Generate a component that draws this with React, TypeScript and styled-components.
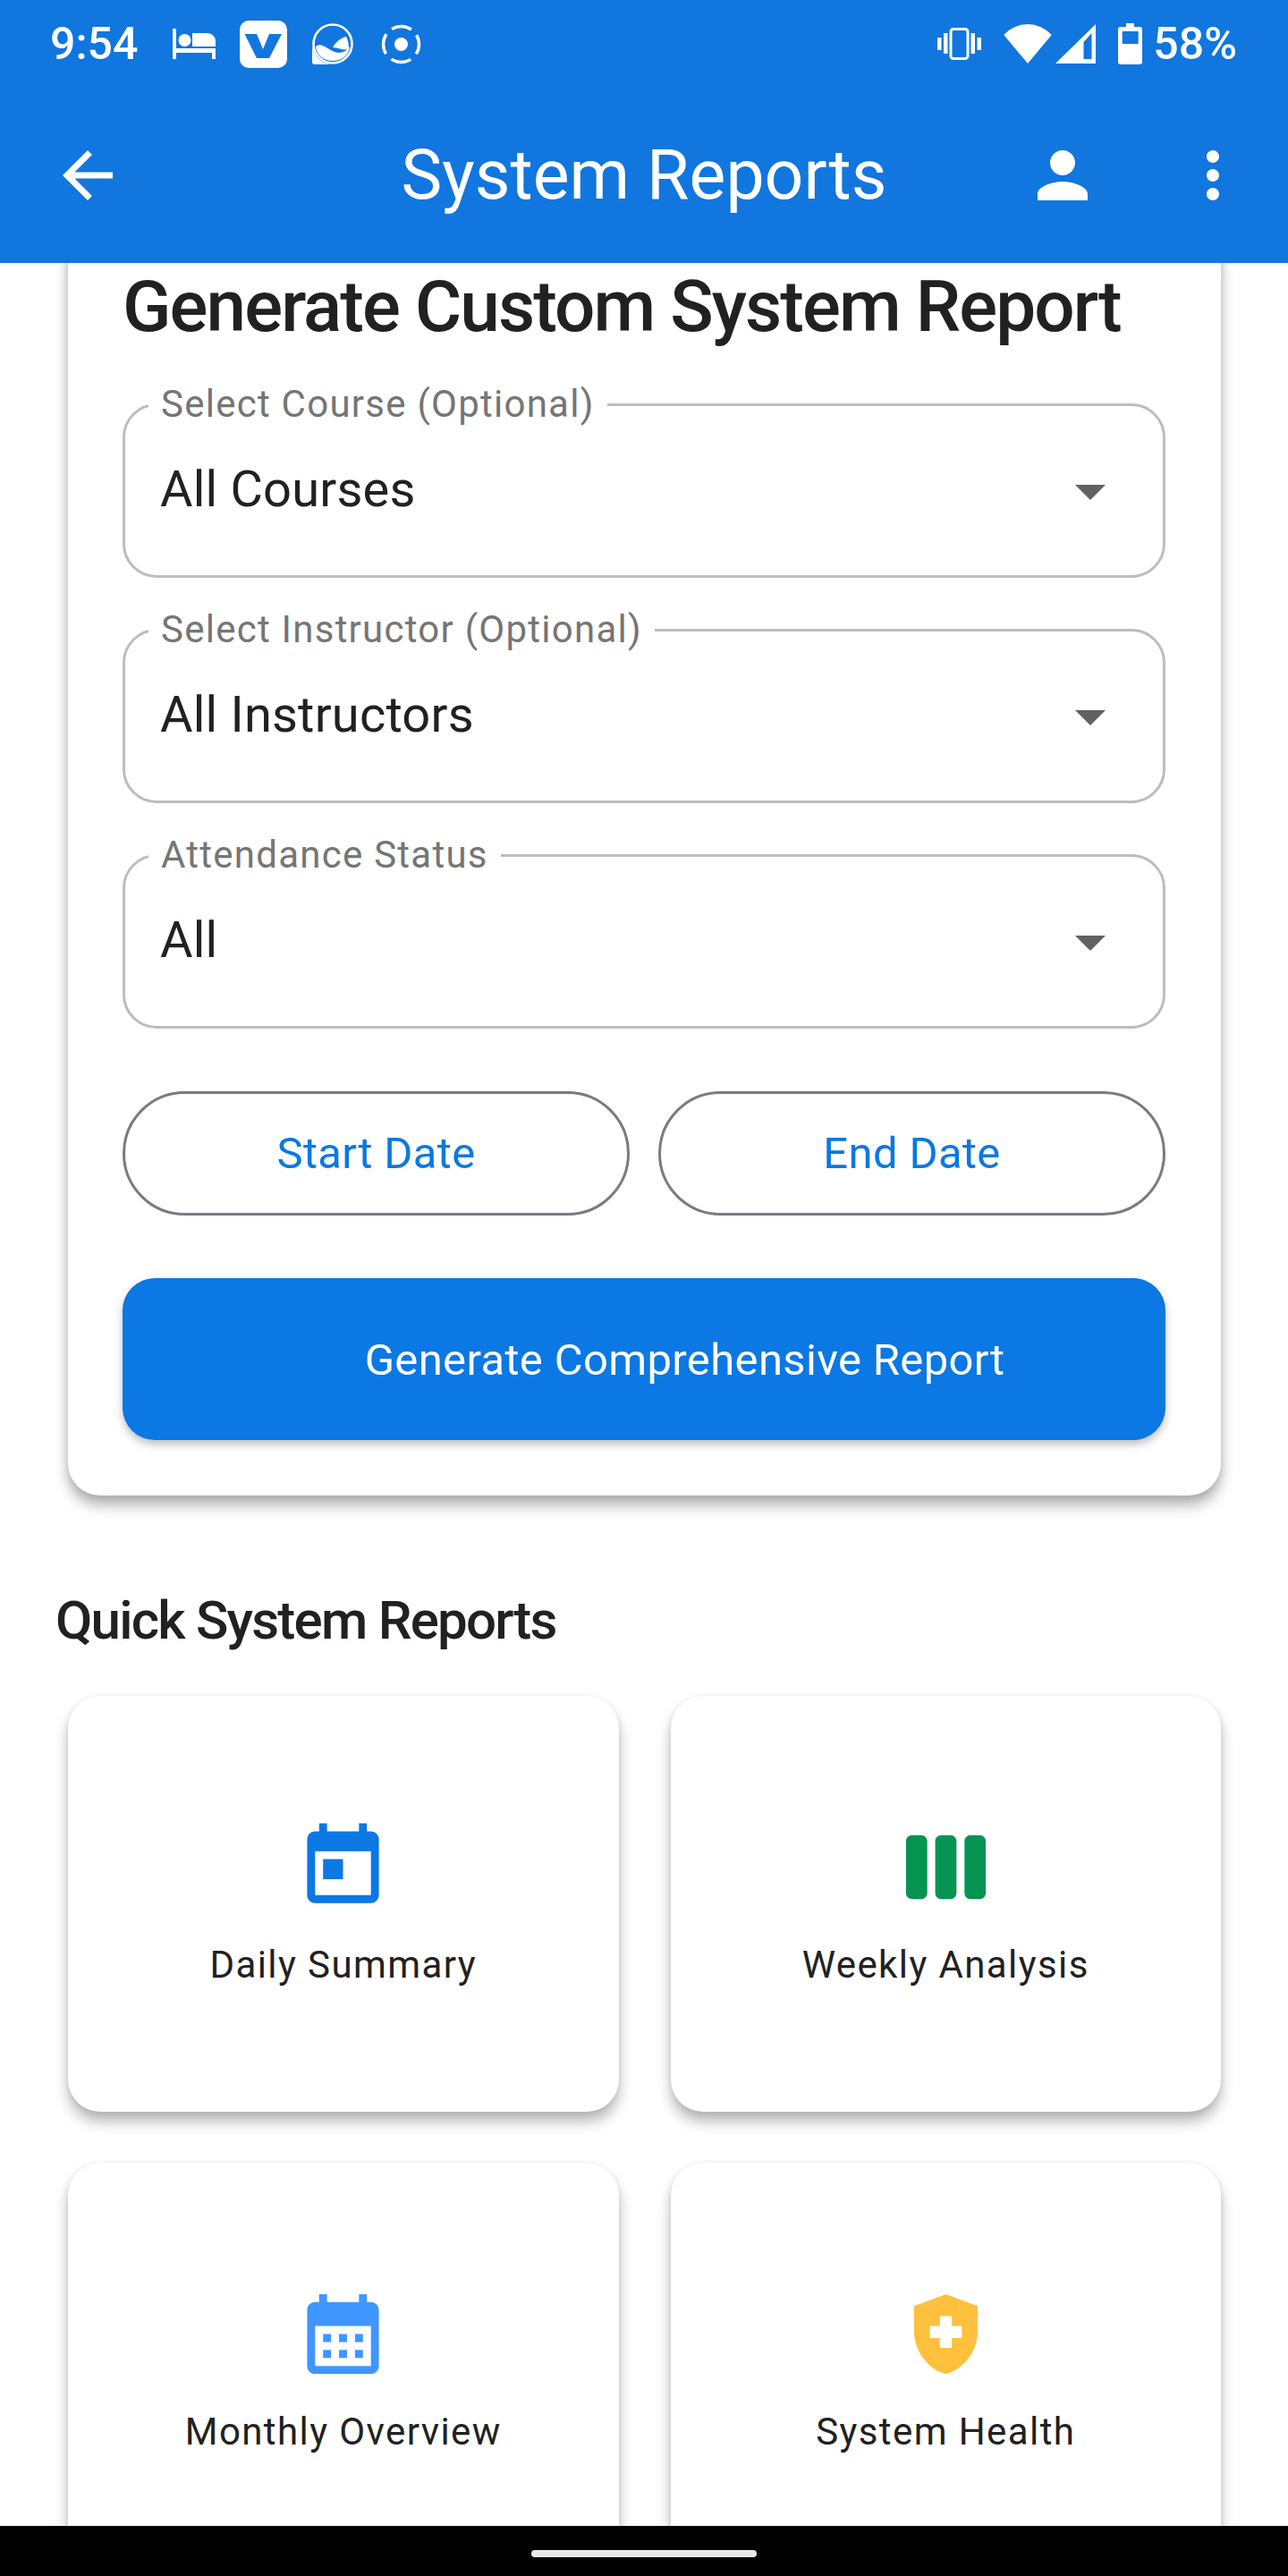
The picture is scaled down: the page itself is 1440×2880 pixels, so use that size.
import styled, { createGlobalStyle } from "styled-components";

const colors = {
  header: "#1176de",
  primary: "#0b78e3",
  ink: "#212121",
  label: "#757575",
  fieldBorder: "#bdbdbd",
  dateBorder: "#7a7a85",
  arrow: "#616161",
};

const GlobalStyle = createGlobalStyle`
  html, body {
    margin: 0;
    padding: 0;
    background: #fff;
  }
  * {
    box-sizing: border-box;
  }
  body {
    font-family: Roboto, "Liberation Sans", sans-serif;
  }
`;

const Screen = styled.div`
  width: 1440px;
  height: 2880px;
  display: flex;
  flex-direction: column;
  overflow: hidden;
  background: #fff;
`;

const Header = styled.header`
  height: 294px;
  flex: none;
  background: ${colors.header};
  color: #fff;
`;

const StatusBar = styled.div`
  height: 98px;
  padding: 0 57px 0 56px;
  display: flex;
  align-items: center;
  justify-content: space-between;
`;

const StatusGroup = styled.div`
  display: flex;
  align-items: center;
`;

const StatusText = styled.span`
  font-size: 50px;
  font-weight: 500;
  line-height: 56px;
`;

const StatusSlot = styled.span<{ $gap: number }>`
  display: flex;
  margin-left: ${(p) => p.$gap}px;
`;

const AppBar = styled.div`
  height: 196px;
  padding: 0 42px;
  display: grid;
  grid-template-columns: 1fr auto 1fr;
  align-items: center;
`;

const AppBarTitle = styled.h1`
  margin: 0;
  font-size: 77px;
  font-weight: 400;
  line-height: 100px;
`;

const AppBarActions = styled.div<{ $end?: boolean }>`
  display: flex;
  gap: 84px;
  padding-left: ${(p) => (p.$end ? 0 : 14)}px;
  justify-content: ${(p) => (p.$end ? "flex-end" : "flex-start")};
`;

const Content = styled.main`
  flex: 1;
  min-height: 0;
  overflow: hidden;
`;

const FormCard = styled.section`
  margin: -40px 75px 0 76px;
  padding: 41px 62px 62px 61px;
  background: #fff;
  border-radius: 36px;
  box-shadow: 0 11px 15px rgba(0, 0, 0, 0.3), 0 1px 8px rgba(0, 0, 0, 0.1);
`;

const FormTitle = styled.h2`
  margin: 0;
  font-size: 80px;
  font-weight: 500;
  line-height: 96px;
  letter-spacing: -1.9px;
  color: ${colors.ink};
  white-space: nowrap;
`;

const FieldStack = styled.div`
  margin-top: 38px;
  display: flex;
  flex-direction: column;
  gap: 35px;
`;

const Field = styled.fieldset`
  margin: 0;
  padding: 0;
  border: 3px solid ${colors.fieldBorder};
  border-radius: 38px;
`;

const FieldLabel = styled.legend`
  margin-left: 26px;
  padding: 0 14px;
  font-size: 42px;
  line-height: 46px;
  letter-spacing: 1.25px;
  color: ${colors.label};
  white-space: nowrap;
`;

const FieldBody = styled.div`
  height: 168px;
  padding: 0 64px 24px 39px;
  display: flex;
  align-items: center;
  justify-content: space-between;
`;

const FieldValue = styled.span`
  font-size: 56px;
  line-height: 66px;
  letter-spacing: 0.2px;
  color: ${colors.ink};
`;

const FieldArrow = styled.span`
  width: 0;
  height: 0;
  margin-top: 6px;
  border-left: 17px solid transparent;
  border-right: 17px solid transparent;
  border-top: 17px solid ${colors.arrow};
`;

const DateRow = styled.div`
  margin-top: 70px;
  display: grid;
  grid-template-columns: 1fr 1fr;
  gap: 32px;
`;

const DateButton = styled.button`
  height: 139px;
  background: #fff;
  border: 3px solid ${colors.dateBorder};
  border-radius: 70px;
  font-family: inherit;
  font-size: 49px;
  letter-spacing: 0.35px;
  color: ${colors.primary};
`;

const GenerateButton = styled.button`
  width: 100%;
  height: 181px;
  margin-top: 70px;
  padding: 2px 0 0 91px;
  background: ${colors.primary};
  border: 0;
  border-radius: 36px;
  box-shadow: 0 5px 10px rgba(0, 0, 0, 0.25);
  font-family: inherit;
  font-size: 49px;
  letter-spacing: 0.35px;
  color: #fff;
`;

const SectionTitle = styled.h3`
  margin: 103px 0 0 62px;
  font-size: 60px;
  font-weight: 500;
  line-height: 74px;
  letter-spacing: -1.75px;
  color: ${colors.ink};
`;

const ReportGrid = styled.div`
  margin: 47px 75px 0 76px;
  display: grid;
  grid-template-columns: 1fr 1fr;
  gap: 57px 58px;
`;

const ReportCard = styled.div`
  height: 465px;
  padding-top: 138px;
  background: #fff;
  border-radius: 36px;
  box-shadow: 0 11px 15px rgba(0, 0, 0, 0.28), 0 1px 6px rgba(0, 0, 0, 0.08);
  display: flex;
  flex-direction: column;
  align-items: center;
`;

const ReportIcon = styled.svg`
  display: block;
  width: 107px;
  height: 107px;
  flex: none;
`;

const ReportLabel = styled.span`
  margin-top: 31px;
  font-size: 42px;
  line-height: 50px;
  letter-spacing: 1.4px;
  color: ${colors.ink};
`;

const NavBar = styled.div`
  height: 56px;
  flex: none;
  background: #000;
  display: flex;
  justify-content: center;
  padding-top: 27px;
`;

const NavPill = styled.div`
  width: 252px;
  height: 8px;
  border-radius: 4px;
  background: #e8e8e8;
`;

const BedIcon = () => (
  <svg width="49" height="34" viewBox="0 0 49 34" fill="#fff">
    <rect width="4" height="34" />
    <circle cx="13.5" cy="13" r="7" />
    <path d="M22 5h17a9 9 0 0 1 9 9v6H22z" />
    <rect y="22" width="48" height="5" />
    <rect x="44" y="22" width="4" height="12" />
  </svg>
);

const VenmoIcon = () => (
  <svg width="53" height="53" viewBox="0 0 53 53">
    <rect width="53" height="53" rx="10" fill="#fff" />
    <path d="M5.5 15H19l7 17 7-17h14L33 42H19z" fill={colors.header} />
  </svg>
);

const WaveIcon = () => (
  <svg width="47" height="46" viewBox="0 0 47 46" fill="#fff">
    <circle cx="24" cy="23" r="21.5" fill="none" stroke="#fff" strokeWidth="2.6" />
    <path d="M1 23v20a3 3 0 0 0 3 3h20C12 46 1 36 1 23z" />
    <path d="M5 26c7-6 15 6 25 7 6 0 11-3 13-7-1 10-9 16-19 16C13 42 6 35 5 26z" />
    <path d="M24 27c4-7 10-11 15-12 2 3 3 9 3 14-6 2-12-2-18-2z" />
  </svg>
);

const TargetIcon = () => (
  <svg width="45" height="45" viewBox="0 0 45 45" fill="#fff">
    <circle cx="22.5" cy="22.5" r="7.5" />
    <circle
      cx="22.5"
      cy="22.5"
      r="20"
      fill="none"
      stroke="#fff"
      strokeWidth="3.5"
      strokeDasharray="23 8.4"
      strokeDashoffset="11.5"
    />
  </svg>
);

const VibrateIcon = () => (
  <svg width="49" height="36" viewBox="0 0 49 36" fill="#fff">
    <rect x="0" y="11" width="4.5" height="14" />
    <rect x="7" y="6" width="4.5" height="23" />
    <rect x="37.5" y="6" width="4.5" height="23" />
    <rect x="44.5" y="11" width="4.5" height="14" />
    <rect x="15" y="1.5" width="19" height="33" rx="3" fill="none" stroke="#fff" strokeWidth="3" />
  </svg>
);

const WifiIcon = () => (
  <svg width="54" height="44" viewBox="0 0 53.5 44" fill="#fff">
    <path d="M0 12A36 36 0 0 1 53.5 12L26.75 44z" />
  </svg>
);

const SignalIcon = () => (
  <svg width="45" height="44" viewBox="0 0 45 44" fill="#fff">
    <path fillRule="evenodd" d="M45 0v44H0zM40.5 10 31.5 20v19h9z" />
  </svg>
);

const BatteryIcon = () => (
  <svg width="27" height="46" viewBox="0 0 27 46" fill="#fff">
    <path
      fillRule="evenodd"
      d="M9 0h9v4h6a3 3 0 0 1 3 3v36a3 3 0 0 1-3 3H3a3 3 0 0 1-3-3V7a3 3 0 0 1 3-3h6zM4.7 9v14h18V9z"
    />
  </svg>
);

const HeaderIcon = ({ d }: { d: string }) => (
  <svg width="84" height="84" viewBox="0 0 24 24" fill="#fff">
    <path d={d} />
  </svg>
);

const fields = [
  { label: "Select Course (Optional)", value: "All Courses" },
  { label: "Select Instructor (Optional)", value: "All Instructors" },
  { label: "Attendance Status", value: "All" },
];

const reports = [
  {
    label: "Daily Summary",
    color: "#0b78e3",
    d: "M19 3h-1V1h-2v2H8V1H6v2H5c-1.11 0-1.99.9-1.99 2L3 19c0 1.1.89 2 2 2h14c1.1 0 2-.9 2-2V5c0-1.1-.9-2-2-2zm0 16H5V8h14v11zM7 10h5v5H7z",
  },
  {
    label: "Weekly Analysis",
    color: "#059452",
    d: "M3.5 4h2.33c.83 0 1.5.67 1.5 1.5v13c0 .83-.67 1.5-1.5 1.5H3.5C2.67 20 2 19.33 2 18.5v-13C2 4.67 2.67 4 3.5 4zm7.33 0h2.33c.83 0 1.5.67 1.5 1.5v13c0 .83-.67 1.5-1.5 1.5h-2.33c-.83 0-1.5-.67-1.5-1.5v-13c0-.83.67-1.5 1.5-1.5zm7.34 0h2.33c.83 0 1.5.67 1.5 1.5v13c0 .83-.67 1.5-1.5 1.5h-2.33c-.83 0-1.5-.67-1.5-1.5v-13c0-.83.67-1.5 1.5-1.5z",
  },
  {
    label: "Monthly Overview",
    color: "#4096ff",
    d: "M19 4h-1V2h-2v2H8V2H6v2H5c-1.11 0-1.99.9-1.99 2L3 20c0 1.1.89 2 2 2h14c1.1 0 2-.9 2-2V6c0-1.1-.9-2-2-2zm0 16H5V10h14v10zM7 12h2v2H7zm4 0h2v2h-2zm4 0h2v2h-2zM7 16h2v2H7zm4 0h2v2h-2zm4 0h2v2h-2z",
  },
  {
    label: "System Health",
    color: "#ffc03d",
    d: "M10.5 13H8v-3h2.5V7.5h3V10H16v3h-2.5v2.5h-3V13zM12 2L4 5v6.09c0 5.05 3.41 9.76 8 10.91 4.59-1.15 8-5.86 8-10.91V5l-8-3z",
  },
];

const App = () => {
  return (
    <Screen>
      <GlobalStyle />
      <Header>
        <StatusBar>
          <StatusGroup>
            <StatusText>9:54</StatusText>
            <StatusSlot $gap={39}><BedIcon /></StatusSlot>
            <StatusSlot $gap={26}><VenmoIcon /></StatusSlot>
            <StatusSlot $gap={27}><WaveIcon /></StatusSlot>
            <StatusSlot $gap={31}><TargetIcon /></StatusSlot>
          </StatusGroup>
          <StatusGroup>
            <StatusSlot $gap={0}><VibrateIcon /></StatusSlot>
            <StatusSlot $gap={25}><WifiIcon /></StatusSlot>
            <StatusSlot $gap={4}><SignalIcon /></StatusSlot>
            <StatusSlot $gap={25}><BatteryIcon /></StatusSlot>
            <StatusSlot $gap={12}><StatusText>58%</StatusText></StatusSlot>
          </StatusGroup>
        </StatusBar>
        <AppBar>
          <AppBarActions>
            <HeaderIcon d="M20 11H7.83l5.59-5.59L12 4l-8 8 8 8 1.41-1.41L7.83 13H20v-2z" />
          </AppBarActions>
          <AppBarTitle>System Reports</AppBarTitle>
          <AppBarActions $end>
            <HeaderIcon d="M12 12c2.21 0 4-1.79 4-4s-1.79-4-4-4-4 1.79-4 4 1.79 4 4 4zm0 2c-2.67 0-8 1.34-8 4v2h16v-2c0-2.66-5.33-4-8-4z" />
            <HeaderIcon d="M12 8c1.1 0 2-.9 2-2s-.9-2-2-2-2 .9-2 2 .9 2 2 2zm0 2c-1.1 0-2 .9-2 2s.9 2 2 2 2-.9 2-2-.9-2-2-2zm0 6c-1.1 0-2 .9-2 2s.9 2 2 2 2-.9 2-2-.9-2-2-2z" />
          </AppBarActions>
        </AppBar>
      </Header>

      <Content>
        <FormCard>
          <FormTitle>Generate Custom System Report</FormTitle>
          <FieldStack>
            {fields.map((field) => (
              <Field key={field.label}>
                <FieldLabel>{field.label}</FieldLabel>
                <FieldBody>
                  <FieldValue>{field.value}</FieldValue>
                  <FieldArrow />
                </FieldBody>
              </Field>
            ))}
          </FieldStack>
          <DateRow>
            <DateButton>Start Date</DateButton>
            <DateButton>End Date</DateButton>
          </DateRow>
          <GenerateButton>Generate Comprehensive Report</GenerateButton>
        </FormCard>

        <SectionTitle>Quick System Reports</SectionTitle>
        <ReportGrid>
          {reports.map((report) => (
            <ReportCard key={report.label}>
              <ReportIcon viewBox="0 0 24 24" fill={report.color}>
                <path d={report.d} />
              </ReportIcon>
              <ReportLabel>{report.label}</ReportLabel>
            </ReportCard>
          ))}
        </ReportGrid>
      </Content>

      <NavBar>
        <NavPill />
      </NavBar>
    </Screen>
  );
};

export default App;
